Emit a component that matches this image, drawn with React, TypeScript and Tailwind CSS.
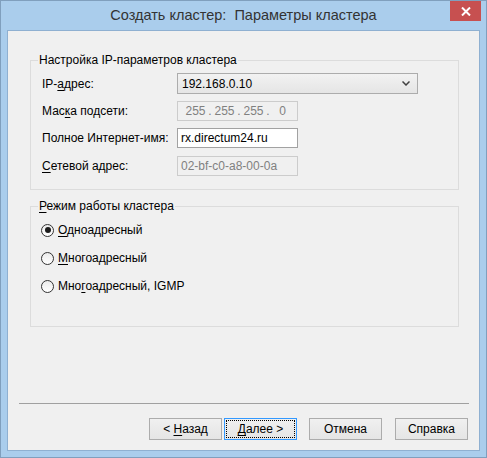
import React from 'react'

// accelerator letter, underlined like a Win32 dialog
function U({ children }: { children: string }) {
  return <span className="underline decoration-1 underline-offset-[2px]">{children}</span>
}

function GroupBox({ title, className, children }: { title: React.ReactNode; className: string; children: React.ReactNode }) {
  return (
    <div className={`relative border border-[#dcdcdc] ${className}`}>
      <span className="absolute -top-[8px] left-[7px] bg-[#f0f0f0] px-[1px] leading-[14px]">{title}</span>
      {children}
    </div>
  )
}

function Radio({ checked, label }: { checked?: boolean; label: React.ReactNode }) {
  return (
    <div className="h-[16px] flex items-center">
      <span className="ml-[10px] w-[13px] h-[13px] rounded-full border border-[#333] bg-gradient-to-b from-[#ebebeb] to-[#ffffff] flex items-center justify-center">
        {checked && <span className="w-[6px] h-[6px] rounded-full bg-[#1b1b1b]" />}
      </span>
      <span className="ml-[4px]">{label}</span>
    </div>
  )
}

function Button({ children, isDefault, className }: { children: React.ReactNode; isDefault?: boolean; className?: string }) {
  return (
    <div
      className={`relative w-[73px] h-[22px] flex items-center justify-center border bg-gradient-to-b from-[#f0f0f0] to-[#e5e5e5] ${
        isDefault ? 'border-[#3399ff]' : 'border-[#acacac]'
      } ${className ?? ''}`}
    >
      {isDefault && <span className="absolute inset-[1px] border border-dotted border-black" />}
      <span>{children}</span>
    </div>
  )
}

const MASK = ['255', '255', '255', '0']

export default function App() {
  return (
    <div className="w-[487px] h-[458px] flex flex-col bg-[#aacdec] border border-[#809fbd] font-['Liberation_Sans',Arial,sans-serif] text-[12px] text-black">
      {/* Title bar */}
      <div className="relative h-[29px] shrink-0 flex items-center justify-center">
        <span className="text-[14.5px] text-[#333] leading-none">Создать кластер:&nbsp; Параметры кластера</span>
        <div className="absolute top-0 right-[5px] w-[31px] h-[20px] bg-[#c75050] flex items-center justify-center">
          <svg width="10" height="9" viewBox="0 0 10 9">
            <path d="M1 0.5 L9 8.5 M9 0.5 L1 8.5" stroke="#fff" strokeWidth="2" />
          </svg>
        </div>
      </div>

      {/* Client area */}
      <div className="flex-1 mx-[6px] mb-[6px] border border-[#8fb0d1] bg-[#f0f0f0] flex flex-col">
        <GroupBox title="Настройка IP-параметров кластера" className="mt-[29px] ml-[22px] mr-[20px] h-[130px] pt-[12px] pl-[11px]">
          <div className="h-[21px] flex items-center">
            <span className="w-[135px]">IP-<U>а</U>дрес:</span>
            <div className="w-[241px] h-[21px] border border-[#acacac] bg-gradient-to-b from-[#f2f2f2] to-[#e5e5e5] flex items-center pl-[4px] pr-[7px]">
              <span className="flex-1">192.168.0.10</span>
              <svg width="8" height="5" viewBox="0 0 8 5">
                <path d="M0.5 0.5 L4 4 L7.5 0.5" stroke="#404040" strokeWidth="1.5" fill="none" />
              </svg>
            </div>
          </div>
          <div className="mt-[7px] h-[20px] flex items-center">
            <span className="w-[135px]">Мас<U>к</U>а подсети:</span>
            <div className="w-[121px] h-[20px] border border-[#cccccc] bg-[#f0f0f0] flex items-center pl-[7px] text-[#808080]">
              {MASK.map((m, i) => (
                <React.Fragment key={i}>
                  <span className="w-[21px] text-center">{m}</span>
                  {i < 3 && <span className="w-[8px] text-center">.</span>}
                </React.Fragment>
              ))}
            </div>
          </div>
          <div className="mt-[7px] h-[20px] flex items-center">
            <span className="w-[135px]">Полное Интернет-имя:</span>
            <div className="w-[121px] h-[20px] border border-[#a2a2a2] bg-white flex items-center pl-[3px]">rx.directum24.ru</div>
          </div>
          <div className="mt-[8px] h-[20px] flex items-center">
            <span className="w-[135px]"><U>С</U>етевой адрес:</span>
            <div className="w-[121px] h-[20px] border border-[#cccccc] bg-[#f0f0f0] flex items-center pl-[3px] text-[#808080]">02-bf-c0-a8-00-0a</div>
          </div>
        </GroupBox>

        <GroupBox title={<><U>Р</U>ежим работы кластера</>} className="mt-[16px] ml-[22px] mr-[20px] h-[121px] pt-[15px]">
          <Radio checked label={<><U>О</U>дноадресный</>} />
          <div className="mt-[12px]">
            <Radio label={<><U>М</U>ногоадресный</>} />
          </div>
          <div className="mt-[12px]">
            <Radio label={<>Мно<U>г</U>оадресный, IGMP</>} />
          </div>
        </GroupBox>

        <div className="flex-1" />
        <div className="h-px ml-[11px] mr-[10px] bg-[#a0a0a0]" />
        <div className="mt-[14px] mb-[10px] flex justify-end pr-[11px]">
          <Button>&lt; <U>Н</U>азад</Button>
          <Button isDefault className="ml-[2px]"><U>Д</U>алее &gt;</Button>
          <Button className="ml-[12px]">Отмена</Button>
          <Button className="ml-[13px]">Справка</Button>
        </div>
      </div>
    </div>
  )
}
